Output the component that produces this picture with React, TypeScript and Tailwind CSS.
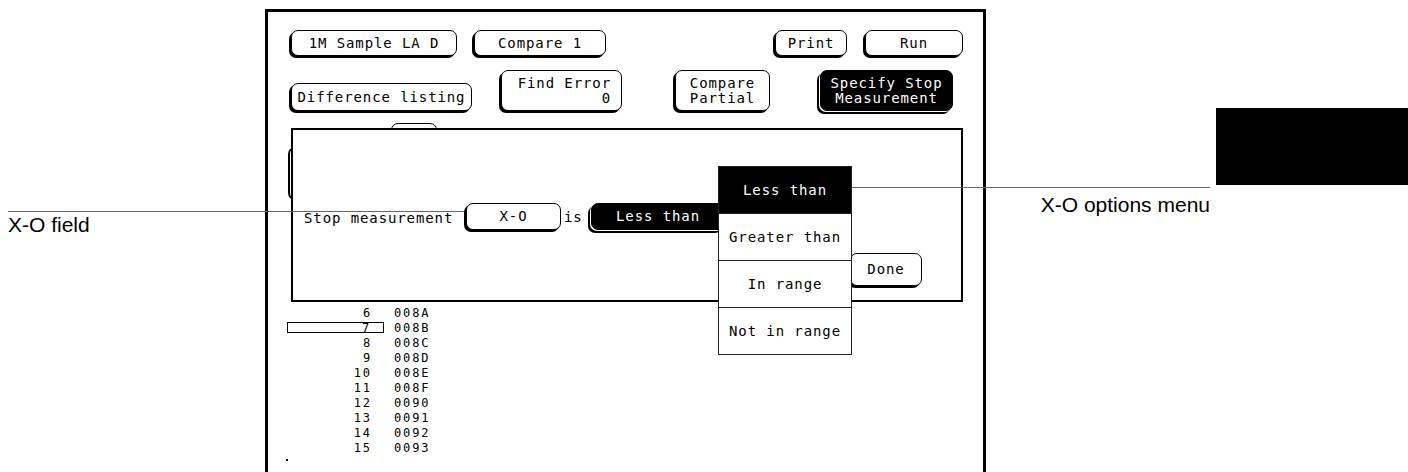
import React from "react";

const mono = "font-['DejaVu_Sans_Mono',monospace] text-[14px] tracking-[0.9px] leading-[15px]";

function Btn({
  className = "",
  dark = false,
  children,
}: {
  className?: string;
  dark?: boolean;
  children: React.ReactNode;
}) {
  return (
    <div
      className={`flex shrink-0 flex-col items-center justify-center rounded-[7px] border border-black ${mono} ${
        dark
          ? "bg-black text-white shadow-[-1px_1px_0_0_#fff,-3px_3px_0_0_#000]"
          : "bg-white text-black shadow-[-2px_2px_0_0_#000]"
      } ${className}`}
    >
      {children}
    </div>
  );
}

const rows: [string, string][] = [
  ["6", "008A"],
  ["7", "008B"],
  ["8", "008C"],
  ["9", "008D"],
  ["10", "008E"],
  ["11", "008F"],
  ["12", "0090"],
  ["13", "0091"],
  ["14", "0092"],
  ["15", "0093"],
];

export default function App() {
  return (
    <div className="relative h-[472px] w-[1408px] overflow-hidden bg-white text-black">
      <div className="flex">
        <div className="w-[265px] shrink-0" />
        {/* instrument screen */}
        <div className="relative mt-[9px] h-[480px] w-[721px] shrink-0 border-[3px] border-black bg-white">
          {/* buttons partly hidden behind the dialog */}
          <div className="absolute left-[123px] top-[111px] h-[30px] w-[46px] rounded-[7px] border border-black bg-white" />
          <div className="absolute left-[21px] top-[135px] h-[53px] w-[80px] rounded-[7px] border border-black bg-white shadow-[-1px_0_0_0_#000]" />

          {/* row 1 */}
          <div className="ml-[23px] mt-[18px] flex h-[26px]">
            <Btn className="h-[26px] w-[166px]">1M Sample LA D</Btn>
            <Btn className="ml-[17px] h-[26px] w-[132px]">Compare 1</Btn>
            <Btn className="ml-[169px] h-[26px] w-[72px]">Print</Btn>
            <Btn className="ml-[18px] h-[26px] w-[98px]">Run</Btn>
          </div>

          {/* row 2 */}
          <div className="ml-[23px] mt-[14px] flex items-start">
            <Btn className="mt-[13px] h-[28px] w-[181px]">Difference listing</Btn>
            <div className="ml-[29px] flex h-[41px] w-[121px] shrink-0 flex-col items-end justify-center rounded-[7px] border border-black bg-white pr-[10px] shadow-[-2px_2px_0_0_#000]">
              <span className={mono}>Find Error</span>
              <span className={mono}>0</span>
            </div>
            <Btn className="ml-[53px] h-[41px] w-[95px]">
              <span>Compare</span>
              <span>Partial</span>
            </Btn>
            <Btn dark className="ml-[50px] h-[41px] w-[133px]">
              <span>Specify Stop</span>
              <span>Measurement</span>
            </Btn>
          </div>

          {/* dialog */}
          <div className="relative z-10 ml-[23px] mt-[17px] h-[174px] w-[672px] border-2 border-black bg-white">
            <div className="mt-[73px] flex h-[27px] items-center">
              <span className={`ml-[11px] w-[162px] shrink-0 pt-[3px] ${mono}`}>Stop measurement</span>
              <Btn className="h-[27px] w-[95px]">X-O</Btn>
              <span className={`ml-[3px] w-[27px] shrink-0 pt-[2px] ${mono}`}>is</span>
              <Btn dark className="h-[27px] w-[134px]">
                Less than
              </Btn>
            </div>
            <div className="mt-[23px] flex justify-end pr-[39px]">
              <Btn className="h-[33px] w-[72px]">Done</Btn>
            </div>

            {/* options menu */}
            <div className="absolute left-[425px] top-[36px] z-20 flex w-[134px] flex-col border border-[#222] bg-white">
              <div className={`flex h-[46px] items-center justify-center bg-black text-white ${mono}`}>Less than</div>
              <div className={`flex h-[47px] items-center justify-center border-t border-[#222] ${mono}`}>Greater than</div>
              <div className={`flex h-[47px] items-center justify-center border-t border-[#222] ${mono}`}>In range</div>
              <div className={`flex h-[47px] items-center justify-center border-t border-[#222] ${mono}`}>Not in range</div>
            </div>
          </div>

          {/* listing */}
          <div className="mt-[3px] flex flex-col font-['DejaVu_Sans_Mono',monospace] text-[12px] leading-[12px] tracking-[1.9px]">
            {rows.map(([n, h]) => (
              <div key={n} className="flex h-[15px] items-center pl-[19px]">
                <div
                  className={`flex h-[11px] w-[97px] items-center justify-end pr-[12px] ${
                    n === "7" ? "border border-black" : ""
                  }`}
                >
                  {n}
                </div>
                <div className="ml-[10px]">{h}</div>
              </div>
            ))}
            <div className="ml-[18px] mt-[4px] h-[2px] w-[2px] bg-black" />
          </div>
        </div>

        {/* right side block */}
        <div className="pl-[230px] pt-[108px]">
          <div className="h-[77px] w-[192px] bg-black" />
        </div>
      </div>

      {/* callouts */}
      <div className="absolute left-[8px] top-[211px] z-30 h-px w-[456px] bg-[#666]" />
      <div className="absolute left-[8px] top-[214px] z-30 font-['Liberation_Sans',Arial,sans-serif] text-[21px] leading-[21px]">
        X-O field
      </div>
      <div className="absolute left-[852px] top-[187px] z-30 h-px w-[358px] bg-[#666]" />
      <div className="absolute left-[1030px] top-[194px] z-30 w-[180px] text-right font-['Liberation_Sans',Arial,sans-serif] text-[21px] leading-[21px]">
        X-O options menu
      </div>
    </div>
  );
}
